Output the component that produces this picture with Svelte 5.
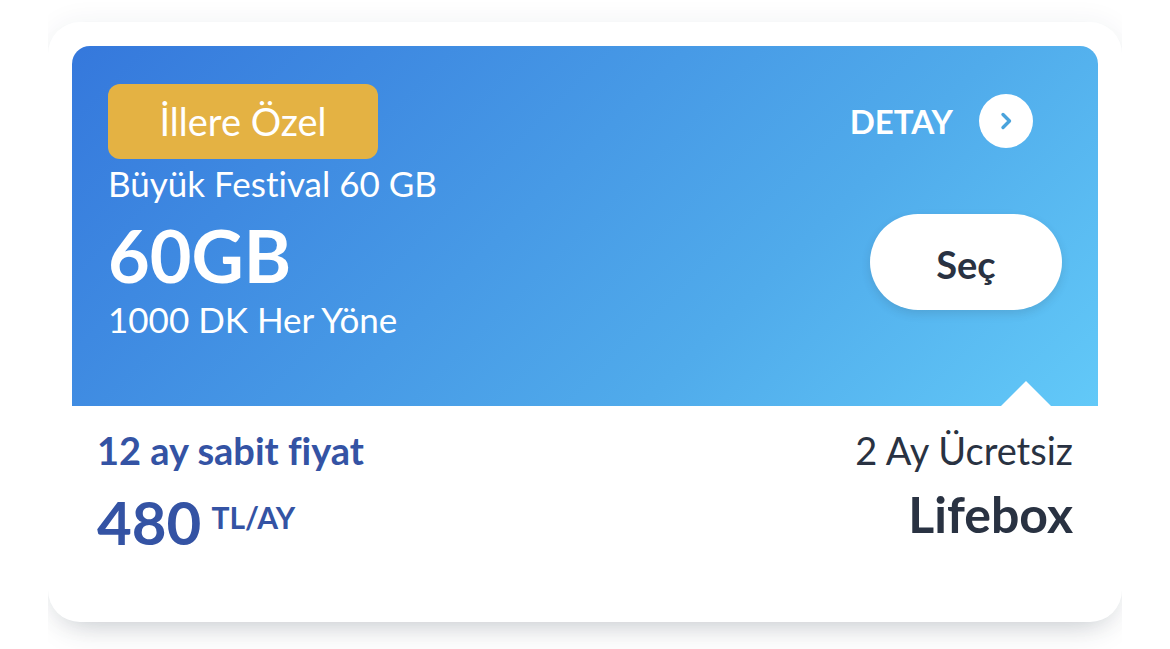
<script lang="ts">
	type Plan = {
		tag: string;
		name: string;
		data: string;
		minutes: string;
		priceNote: string;
		price: string;
		unit: string;
		extraNote: string;
		extra: string;
	};

	const plan: Plan = {
		tag: 'İllere Özel',
		name: 'Büyük Festival 60 GB',
		data: '60GB',
		minutes: '1000 DK Her Yöne',
		priceNote: '12 ay sabit fiyat',
		price: '480',
		unit: 'TL/AY',
		extraNote: '2 Ay Ücretsiz',
		extra: 'Lifebox'
	};

	let selected = $state(false);
</script>

<main class="plans">
	<article class="card">
		<header class="hero">
			<div class="info">
				<span class="tag">{plan.tag}</span>
				<p class="name">{plan.name}</p>
				<h2>{plan.data}</h2>
				<p class="minutes">{plan.minutes}</p>
			</div>
			<div class="actions">
				<a class="detail" href="#detay">
					DETAY
					<span class="circle">
						<svg viewBox="0 0 12 18" width="12" height="18" aria-hidden="true">
							<path d="M3 2.5 L9.5 9 L3 15.5" />
						</svg>
					</span>
				</a>
				<button class="select" aria-pressed={selected} onclick={() => (selected = !selected)}>Seç</button>
			</div>
		</header>

		<div class="summary">
			<div class="price">
				<p class="note">{plan.priceNote}</p>
				<p class="amount">{plan.price}<span class="unit">{plan.unit}</span></p>
			</div>
			<div class="extra">
				<p class="note">{plan.extraNote}</p>
				<p class="gift">{plan.extra}</p>
			</div>
		</div>
	</article>
</main>

<style>
	:global(body) { background: #fff; }

	.plans {
		margin: 0 48px;
		padding: 22px 0 28px;
		overflow: hidden;
		font-family: Lato, "Open Sans", sans-serif;
		font-variant-ligatures: none;
		color: #293242;
	}
	p, h2 { margin: 0; }

	.card {
		padding: 24px 24px 68px;
		border-radius: 32px;
		background: #fff;
		box-shadow: 0 16px 32px -16px rgba(41, 50, 66, 0.28), 0 0 28px rgba(41, 50, 90, 0.06);
	}

	.hero {
		position: relative;
		display: flex;
		justify-content: space-between;
		padding: 38px 36px 63px;
		border-radius: 18px 18px 0 0;
		background: linear-gradient(135deg, #3578dc 0%, #50abeb 67%, #62c9f8 100%);
		color: #fff;
	}
	.hero::after {
		content: '';
		position: absolute;
		right: 47px;
		bottom: 0;
		border: 25px solid transparent;
		border-top: 0;
		border-bottom-color: #fff;
	}

	.info { display: flex; flex-direction: column; align-items: flex-start; }
	.tag {
		box-sizing: border-box;
		min-width: 270px;
		padding: 0 48px;
		border-radius: 12px;
		background: #e4b243;
		font-size: 38px;
		line-height: 75px;
		text-align: center;
	}
	.name, .minutes { font-size: 35px; line-height: 48px; }
	h2 { padding-top: 8px; font-size: 72px; line-height: 80px; font-weight: 700; }

	.actions { display: flex; flex-direction: column; align-items: flex-end; gap: 66px; padding-top: 10px; }
	.detail {
		display: flex;
		align-items: center;
		gap: 26px;
		margin-right: 29px;
		color: #fff;
		font-size: 33px;
		font-weight: 700;
		text-decoration: none;
	}
	.circle {
		display: flex;
		align-items: center;
		justify-content: center;
		width: 54px;
		height: 54px;
		border-radius: 50%;
		background: #fff;
	}
	.circle path {
		fill: none;
		stroke: #4aa3dc;
		stroke-width: 3.4;
		stroke-linecap: round;
		stroke-linejoin: round;
	}
	.select {
		width: 192px;
		height: 96px;
		padding-top: 4px;
		border: 0;
		border-radius: 48px;
		background: #fff;
		box-shadow: 0 4px 10px rgba(41, 50, 66, 0.14);
		color: #293242;
		font-family: inherit;
		font-size: 38px;
		font-weight: 700;
		cursor: pointer;
	}

	.summary { display: flex; justify-content: space-between; padding: 20px 25px 0; }
	.note { font-size: 38px; line-height: 48px; }
	.price { color: #3453a4; font-weight: 700; }
	.amount {
		display: flex;
		align-items: flex-start;
		gap: 10px;
		padding-top: 16px;
		font-size: 60px;
		line-height: 64px;
	}
	.unit { font-size: 30px; line-height: 54px; }
	.extra { text-align: right; }
	.gift { font-size: 50px; line-height: 80px; font-weight: 700; }
</style>
